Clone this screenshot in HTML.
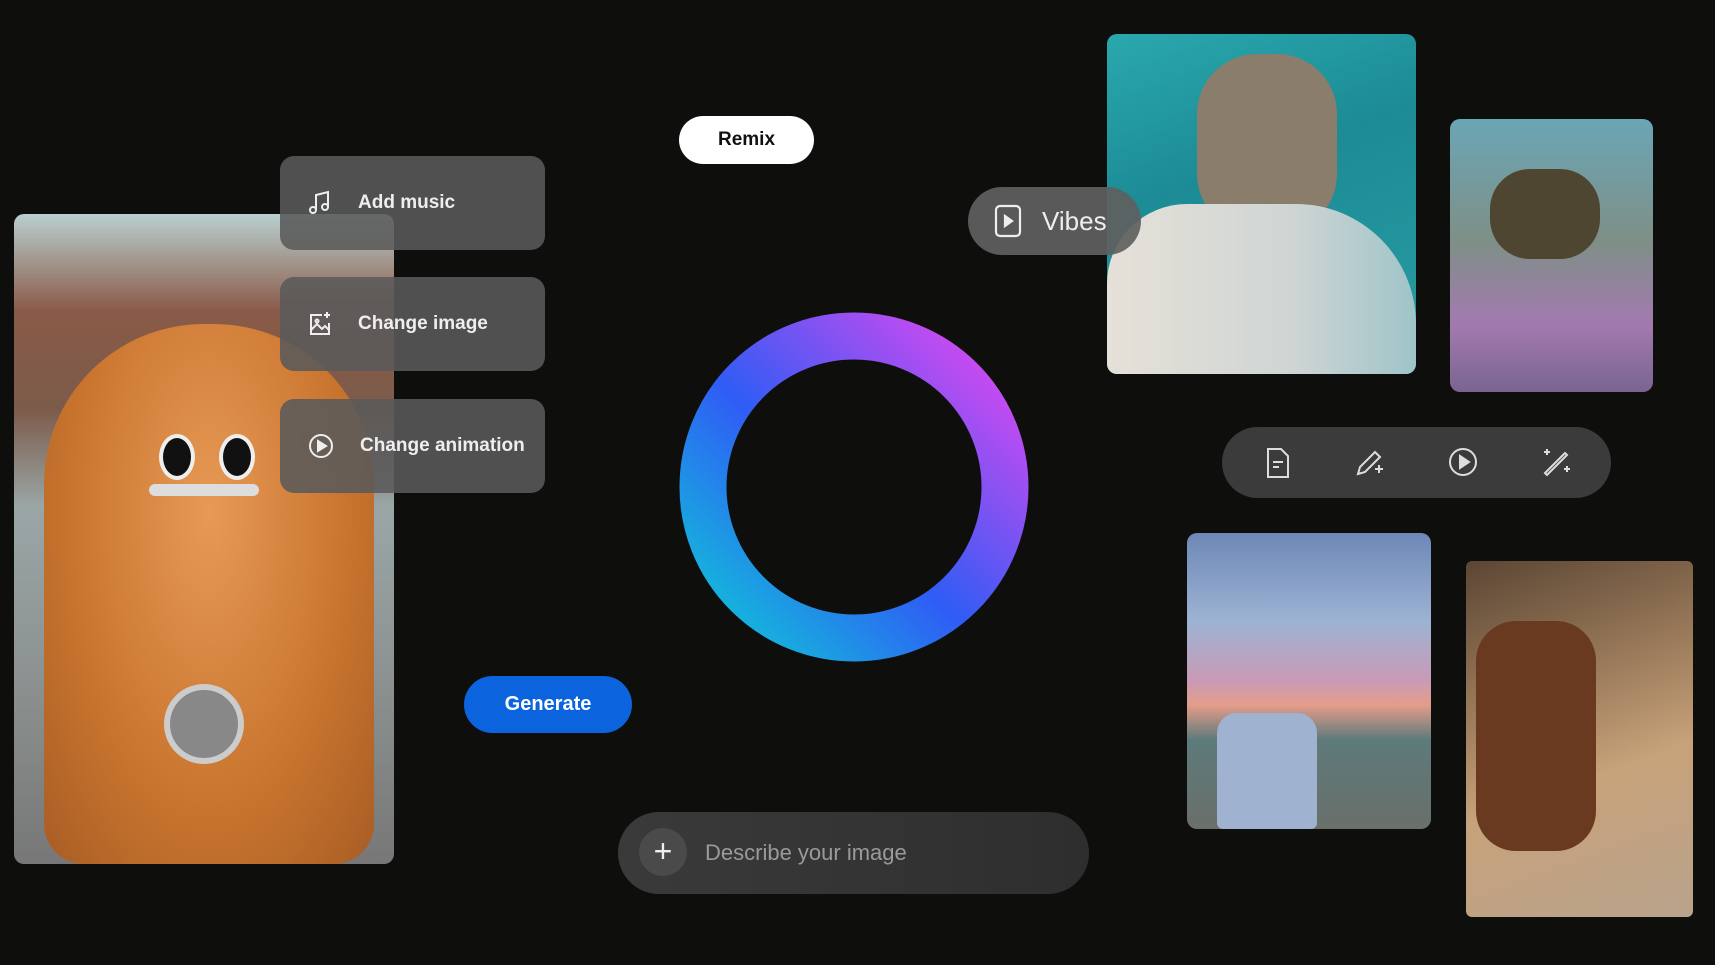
<!DOCTYPE html>
<html><head><meta charset="utf-8"><style>
*{margin:0;padding:0;box-sizing:border-box}
body{width:1715px;height:965px;background:#0e0e0d;position:relative;overflow:hidden;font-family:"Liberation Sans",sans-serif}
.a{position:absolute}
.pic{position:absolute;border-radius:10px;overflow:hidden}
.menu{position:absolute;left:280px;width:265px;height:94px;border-radius:14px;background:rgba(90,90,90,.88);color:#eee;font-size:19px;font-weight:bold;display:flex;align-items:center;padding-left:28px}
.menu svg{margin-right:26px}
</style></head><body>

<div class="pic" style="left:14px;top:214px;width:380px;height:650px;background:linear-gradient(180deg,#b9cfcf 0%,#8a5a48 15%,#7c5b4a 30%,#9aa6a6 45%,#8d9392 70%,#777 100%)">
  <div class="a" style="left:30px;top:110px;width:330px;height:540px;border-radius:160px 160px 40px 40px;background:radial-gradient(ellipse at 50% 35%,#e79a55,#c8742e 60%,#a85d25)"></div>
  <div class="a" style="left:145px;top:220px;width:36px;height:46px;border-radius:50%;background:#111;border:4px solid #eee"></div>
  <div class="a" style="left:205px;top:220px;width:36px;height:46px;border-radius:50%;background:#111;border:4px solid #eee"></div>
  <div class="a" style="left:135px;top:270px;width:110px;height:12px;background:#ddd;border-radius:6px"></div>
  <div class="a" style="left:150px;top:470px;width:80px;height:80px;border-radius:50%;background:#888;border:6px solid #ccc"></div>
</div>

<div class="menu" style="top:156px"><svg width="24" height="26" viewBox="0 0 24 26" fill="none" stroke="#eee" stroke-width="2"><path d="M8 20V5l12-3v15"/><circle cx="5" cy="20" r="3"/><circle cx="17" cy="17" r="3"/></svg>Add music</div>
<div class="menu" style="top:277px"><svg width="24" height="26" viewBox="0 0 24 26" fill="none" stroke="#eee" stroke-width="2"><path d="M14 4H3v19h18V12"/><path d="M3 19l6-6 5 5 3-3 4 4"/><circle cx="9" cy="10" r="1.5"/><path d="M19 1v6M16 4h6"/></svg>Change image</div>
<div class="menu" style="top:399px"><svg width="26" height="26" viewBox="0 0 26 26" fill="none" stroke="#eee" stroke-width="2"><circle cx="13" cy="13" r="11"/><path d="M10 8l8 5-8 5z" fill="#eee"/></svg>Change animation</div>

<div class="a" style="left:679px;top:116px;width:135px;height:48px;border-radius:24px;background:#fff;color:#111;font-size:19px;font-weight:bold;display:flex;align-items:center;justify-content:center">Remix</div>

<svg class="a" style="left:679px;top:312px" width="350" height="350" viewBox="0 0 350 350">
<defs><linearGradient id="g" x1="0" y1="1" x2="1" y2="0"><stop offset="0" stop-color="#10c6d8"/><stop offset=".45" stop-color="#2f5cf5"/><stop offset="1" stop-color="#e248f0"/></linearGradient></defs>
<circle cx="175" cy="175" r="151" fill="none" stroke="url(#g)" stroke-width="47"/></svg>

<div class="a" style="left:464px;top:676px;width:168px;height:57px;border-radius:29px;background:#0b63dd;color:#fff;font-size:20px;font-weight:bold;display:flex;align-items:center;justify-content:center">Generate</div>

<div class="a" style="left:618px;top:812px;width:471px;height:82px;border-radius:41px;background:linear-gradient(90deg,#3a3a3a,#2e2e2e);color:#9a9a9a;font-size:22px;display:flex;align-items:center;padding-left:87px">Describe your image</div>
<div class="a" style="left:639px;top:828px;width:48px;height:48px;border-radius:50%;background:#4a4a4a;color:#eee;font-size:32px;line-height:46px;text-align:center">+</div>

<div class="pic" style="left:1107px;top:34px;width:309px;height:340px;background:linear-gradient(160deg,#2aa8ad,#1c8b95 40%,#2a9ba3)">
  <div class="a" style="left:90px;top:20px;width:140px;height:180px;border-radius:60px;background:#8a7d6b"></div>
  <div class="a" style="left:0;top:170px;width:309px;height:170px;border-radius:80px 120px 0 0;background:linear-gradient(90deg,#e5e1d8,#cfd5d4 60%,#9fc4c8)"></div>
</div>
<div class="pic" style="left:1450px;top:119px;width:203px;height:273px;background:linear-gradient(180deg,#6aa6b5,#7f8f87 45%,#a37ab0 75%,#7a6590)">
  <div class="a" style="left:40px;top:50px;width:110px;height:90px;border-radius:40px;background:#4e4631"></div>
</div>

<div class="a" style="left:968px;top:187px;width:173px;height:68px;border-radius:34px;background:rgba(95,95,95,.92);color:#eee;font-size:26px;display:flex;align-items:center;padding-left:26px">
<svg width="28" height="34" viewBox="0 0 28 34" fill="none" stroke="#eee" stroke-width="2.2" style="margin-right:20px"><rect x="2" y="2" width="24" height="30" rx="4"/><path d="M11 12l7 5-7 5z" fill="#eee"/></svg>Vibes</div>

<div class="a" style="left:1222px;top:427px;width:389px;height:71px;border-radius:36px;background:#3b3b3b"></div>
<svg class="a" style="left:1264px;top:447px" width="28" height="32" viewBox="0 0 28 32" fill="none" stroke="#ddd" stroke-width="2"><path d="M4 2h13l7 7v21H4z"/><path d="M9 15h10M9 20h6"/></svg>
<svg class="a" style="left:1354px;top:446px" width="32" height="32" viewBox="0 0 32 32" fill="none" stroke="#ddd" stroke-width="2"><path d="M4 28l2-7L21 6l5 5L11 26z"/><path d="M25 19v8M21 23h8"/></svg>
<svg class="a" style="left:1447px;top:446px" width="32" height="32" viewBox="0 0 32 32" fill="none" stroke="#ddd" stroke-width="2"><circle cx="16" cy="16" r="13"/><path d="M13 10l9 6-9 6z" fill="#ddd"/></svg>
<svg class="a" style="left:1540px;top:446px" width="32" height="32" viewBox="0 0 32 32" fill="none" stroke="#ddd" stroke-width="2"><path d="M5 27l2 2 20-20-2-2z"/><path d="M7 3v6M4 6h6M27 20v6M24 23h6"/></svg>

<div class="pic" style="left:1187px;top:533px;width:244px;height:296px;background:linear-gradient(180deg,#6d88b8,#9db3d3 30%,#c99ab6 50%,#e59d8a 58%,#5d7a7a 70%,#6a6f6a)">
  <div class="a" style="left:30px;top:180px;width:100px;height:116px;border-radius:20px 20px 6px 6px;background:#9fb3d0"></div>
</div>
<div class="pic" style="left:1466px;top:561px;width:227px;height:356px;border-radius:6px;background:linear-gradient(160deg,#5b4634,#9a7a5a 35%,#c7a27a 60%,#b9a38c)">
  <div class="a" style="left:10px;top:60px;width:120px;height:230px;border-radius:40px;background:#6a3a20"></div>
</div>
</body></html>
